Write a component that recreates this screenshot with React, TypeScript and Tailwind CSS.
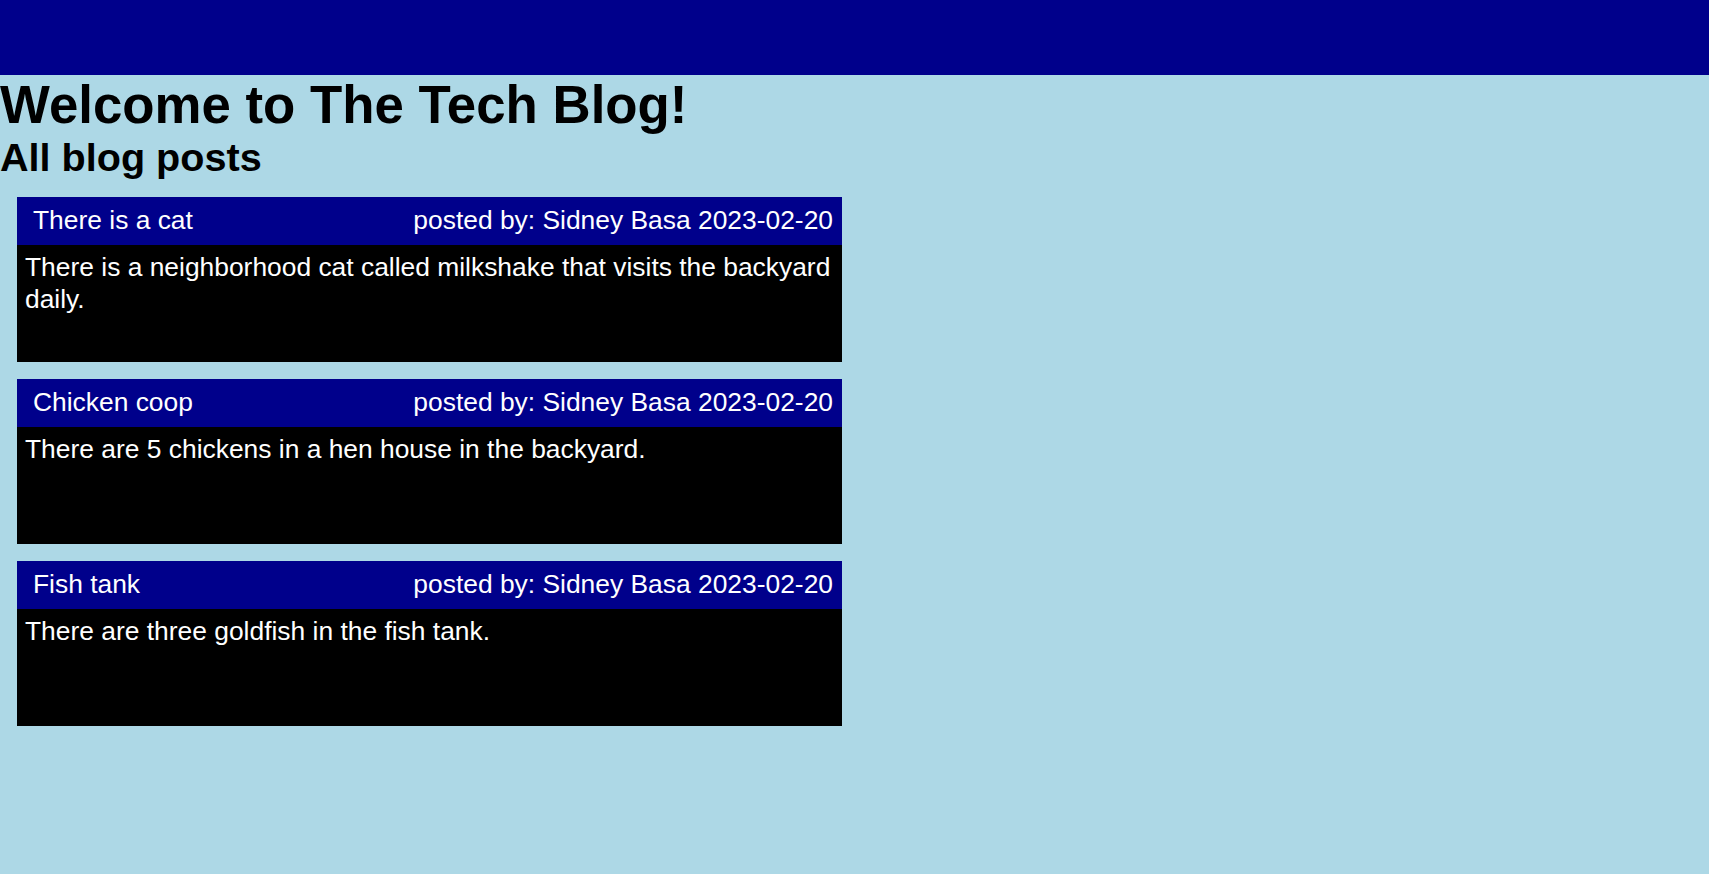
const posts = [
  {
    title: 'There is a cat',
    author: 'Sidney Basa',
    date: '2023-02-20',
    body: 'There is a neighborhood cat called milkshake that visits the backyard daily.',
  },
  {
    title: 'Chicken coop',
    author: 'Sidney Basa',
    date: '2023-02-20',
    body: 'There are 5 chickens in a hen house in the backyard.',
  },
  {
    title: 'Fish tank',
    author: 'Sidney Basa',
    date: '2023-02-20',
    body: 'There are three goldfish in the fish tank.',
  },
];

export default function App() {
  return (
    <div className="min-h-screen bg-[#add8e6] font-['Liberation_Sans',Arial,sans-serif] text-[26.4px] leading-[31.6px]">
      {/* Top nav bar */}
      <header className="h-[75px] bg-[#00008b]" />

      <main>
        <h1 className="m-0 text-[52.8px] leading-[60px] font-bold text-black">Welcome to The Tech Blog!</h1>
        <h2 className="m-0 text-[39.6px] leading-[44px] font-bold text-black">All blog posts</h2>

        <div className="flex flex-col gap-[17px] pt-[18px] pl-[17px]">
          {posts.map((post) => (
            <article key={post.title} className="w-[825px] h-[165px] flex flex-col bg-black text-white">
              <div className="h-[48px] flex items-center justify-between bg-[#00008b] pl-[16px] pr-[9px]">
                <span>{post.title}</span>
                <span>
                  posted by: {post.author} {post.date}
                </span>
              </div>
              <p className="flex-1 pt-[7px] pl-[8px] pr-[8px]">{post.body}</p>
            </article>
          ))}
        </div>
      </main>
    </div>
  );
}
